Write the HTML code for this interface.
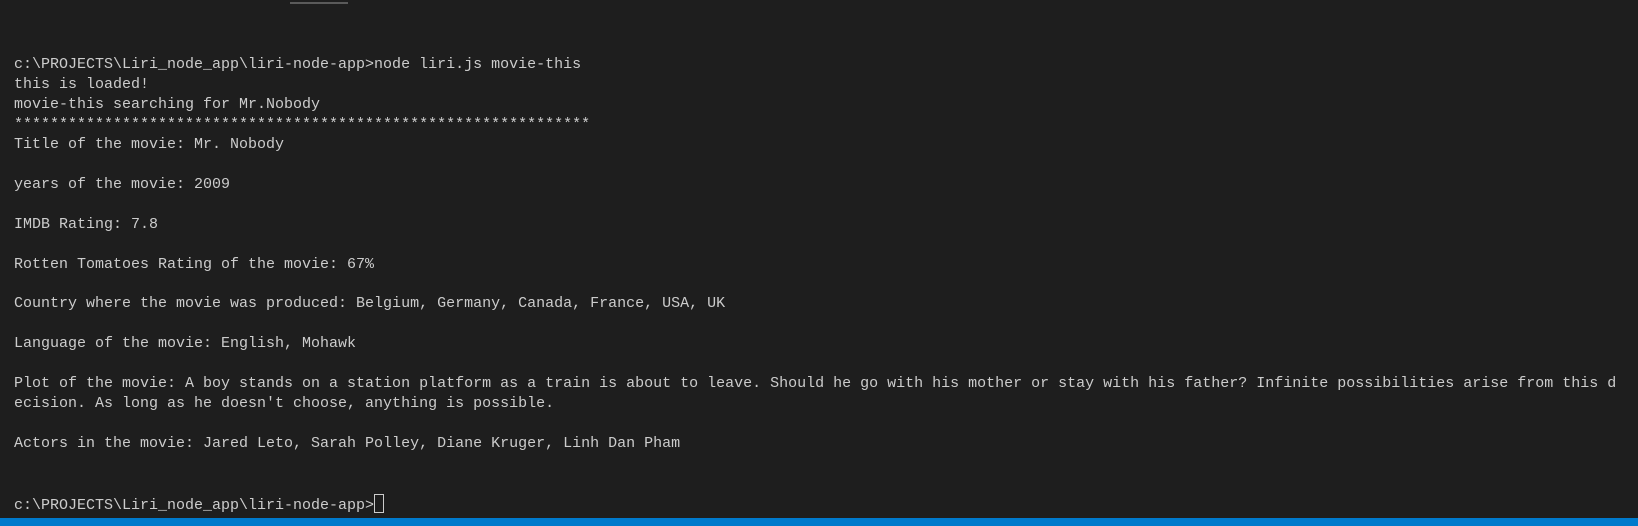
<!DOCTYPE html>
<html><head><style>
html,body{margin:0;padding:0;width:1638px;height:526px;overflow:hidden;background:#1e1e1e}
.top{position:absolute;left:290px;top:2px;width:58px;height:2px;background:#5a5a5a}
pre{position:absolute;left:14px;top:55px;margin:0;font-family:"Liberation Mono",monospace;font-size:15px;line-height:19.95px;color:#cccccc;white-space:pre}
.cur{display:inline-block;width:8px;height:17px;border:1px solid #cccccc;vertical-align:-4px}
.bar{position:absolute;left:0;top:518px;width:1638px;height:8px;background:#007acc}
</style></head><body>
<div class="top"></div>
<pre>c:\PROJECTS\Liri_node_app\liri-node-app>node liri.js movie-this
this is loaded!
movie-this searching for Mr.Nobody
****************************************************************
Title of the movie: Mr. Nobody

years of the movie: 2009

IMDB Rating: 7.8

Rotten Tomatoes Rating of the movie: 67%

Country where the movie was produced: Belgium, Germany, Canada, France, USA, UK

Language of the movie: English, Mohawk

Plot of the movie: A boy stands on a station platform as a train is about to leave. Should he go with his mother or stay with his father? Infinite possibilities arise from this d
ecision. As long as he doesn't choose, anything is possible.

Actors in the movie: Jared Leto, Sarah Polley, Diane Kruger, Linh Dan Pham


c:\PROJECTS\Liri_node_app\liri-node-app><span class="cur"></span></pre>
<div class="bar"></div>
</body></html>
